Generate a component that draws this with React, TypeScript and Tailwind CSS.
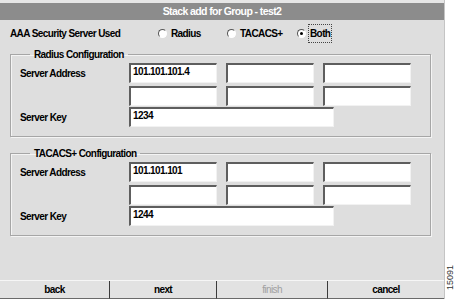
export default function App() {
  return (
    <div className="flex h-[299px] w-[456px] bg-white font-['Liberation_Sans',Arial,sans-serif] text-[10px] font-bold tracking-[-0.6px] text-black">
      {/* Dialog panel */}
      <div className="flex w-[445px] flex-col border-r border-[#c4c4c4] bg-[#dedede]">
        <div className="h-[3px] bg-[#e6e6e6]" />
        <div className="flex h-[17px] items-center justify-center bg-[#8c8c8c] text-[10.5px] text-white">
          Stack add for Group - test2
        </div>

        {/* Server type */}
        <div className="flex h-[26px] items-center pl-[10px]">
          <span className="w-[148px]">AAA Security Server Used</span>
          <Radio label="Radius" className="w-[69px]" />
          <Radio label="TACACS+" className="w-[70px]" />
          <Radio label="Both" checked focused />
        </div>

        <Group
          title="Radius Configuration"
          addr={["101.101.101.4", "", ""]}
          serverKey="1234"
          className="mt-[2px]"
        />
        <Group
          title="TACACS+ Configuration"
          addr={["101.101.101", "", ""]}
          serverKey="1244"
          className="mt-[10px]"
        />

        <div className="flex-1" />

        {/* Wizard buttons */}
        <div className="flex h-[19px] border-t border-[#f6f6f6] bg-[#e2e2e2]">
          <Btn className="w-[110px]">back</Btn>
          <Btn className="w-[107px]">next</Btn>
          <Btn className="w-[111px]" disabled>
            finish
          </Btn>
          <Btn className="flex-1" last>
            cancel
          </Btn>
        </div>
      </div>

      {/* Figure number */}
      <div className="flex flex-1 items-end justify-center pb-[9px]">
        <span className="rotate-180 text-[9px] font-normal leading-none tracking-normal text-[#333] [writing-mode:vertical-rl]">
          15091
        </span>
      </div>
    </div>
  );
}

function Radio({
  label,
  checked,
  focused,
  className = "",
}: {
  label: string;
  checked?: boolean;
  focused?: boolean;
  className?: string;
}) {
  return (
    <div className={`flex items-center ${className}`}>
      <span className="flex size-[9px] items-center justify-center rounded-full border border-b-white border-l-[#555] border-r-white border-t-[#555] bg-white">
        {checked && <span className="size-[3px] rounded-full bg-black" />}
      </span>
      <span
        className={`ml-[2px] px-[1px] py-[1px] ${
          focused ? "border border-dotted border-[#444]" : "border border-transparent"
        }`}
      >
        {label}
      </span>
    </div>
  );
}

function Field({ value, className = "w-[88px]" }: { value?: string; className?: string }) {
  return (
    <div
      className={`flex h-[20px] items-start border-l-2 border-t-2 border-b border-r border-b-[#f2f2f2] border-l-[#5e5e5e] border-r-[#f2f2f2] border-t-[#5e5e5e] bg-white pl-[2px] leading-[14px] ${className}`}
    >
      {value}
    </div>
  );
}

function Group({
  title,
  addr,
  serverKey,
  className = "",
}: {
  title: string;
  addr: string[];
  serverKey: string;
  className?: string;
}) {
  return (
    <fieldset
      className={`ml-[10px] w-[421px] border border-[#a6a6a6] px-[9px] pb-[9px] pt-[2px] shadow-[inset_1px_1px_0_#f4f4f4,1px_1px_0_#f4f4f4] ${className}`}
    >
      <legend className="ml-[10px] px-[4px] leading-[13px]">{title}</legend>
      <div className="flex items-center">
        <span className="w-[109px]">Server Address</span>
        <div className="flex gap-[9px]">
          {addr.map((a, i) => (
            <Field key={i} value={a} />
          ))}
        </div>
      </div>
      <div className="mt-[3px] flex pl-[109px]">
        <div className="flex gap-[9px]">
          <Field />
          <Field />
          <Field />
        </div>
      </div>
      <div className="mt-[1px] flex items-center">
        <span className="w-[109px]">Server Key</span>
        <Field value={serverKey} className="w-[205px]" />
      </div>
    </fieldset>
  );
}

function Btn({
  children,
  className = "",
  disabled,
  last,
}: {
  children: React.ReactNode;
  className?: string;
  disabled?: boolean;
  last?: boolean;
}) {
  return (
    <div
      className={`flex items-center justify-center border-b border-[#6a6a6a] ${
        last ? "" : "border-r border-r-[#3c3c3c]"
      } ${disabled ? "font-normal text-[#a0a0a0]" : ""} ${className}`}
    >
      {children}
    </div>
  );
}
